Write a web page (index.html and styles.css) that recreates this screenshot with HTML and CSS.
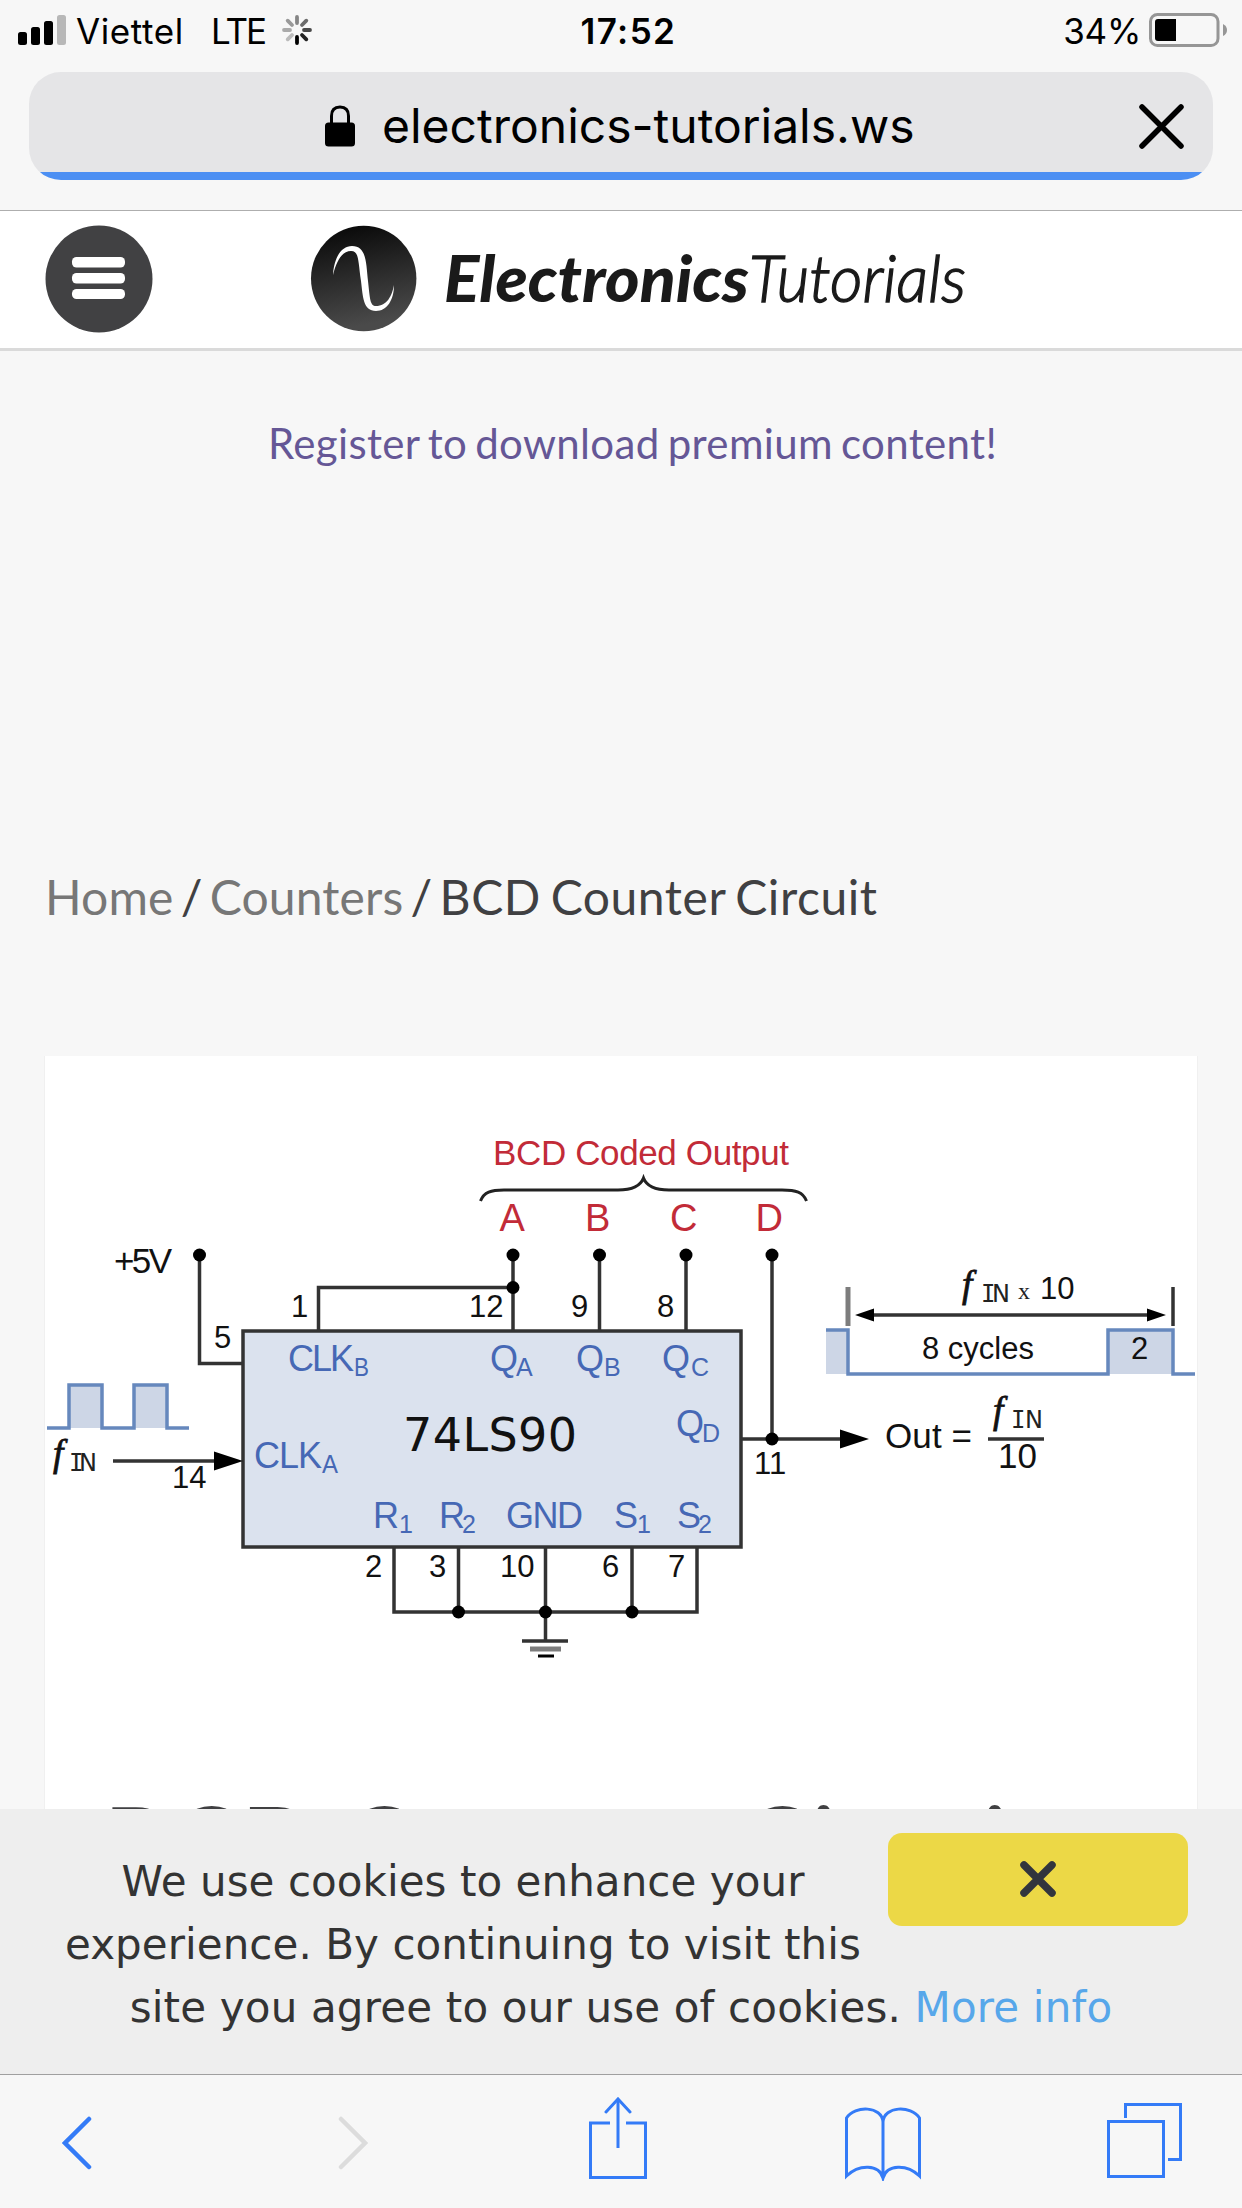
FILE: index.html
```html
<!DOCTYPE html>
<html lang="en">
<head>
<meta charset="utf-8">
<title>BCD Counter Circuit</title>
<link rel="stylesheet" href="styles.css">
</head>
<body>
<div class="screen">
  <header class="browser-top">
    <div class="status">
      <div class="status-left">
        <svg class="signal" width="49" height="30" viewBox="0 0 49 30"><rect x="0" y="17" width="9" height="13" rx="2.5"/><rect x="13" y="12" width="9" height="18" rx="2.5"/><rect x="26" y="6" width="9" height="24" rx="2.5"/><rect x="39" y="0" width="9" height="30" rx="2.5" fill="#b8b8b8"/></svg>
        <span class="carrier">Viettel</span>
        <span class="network">LTE</span>
        <svg class="spinner" width="32" height="32" viewBox="-16 -16 32 32" stroke-width="3.8" stroke-linecap="round"><path d="M0-7V-13" stroke="#858585"/><path d="M5-5L9.300-9.300" stroke="#6b6b6b"/><path d="M7 0H13" stroke="#484848"/><path d="M5 5L9.300 9.300" stroke="#222"/><path d="M0 7V13" stroke="#000"/><path d="M-5 5L-9.300 9.300" stroke="#bbb"/><path d="M-7 0H-13" stroke="#aaa"/><path d="M-5-5L-9.300-9.300" stroke="#999"/></svg>
      </div>
      <span class="clock">17:52</span>
      <div class="status-right">
        <span class="percent">34%</span>
        <svg width="79" height="34" viewBox="0 0 79 34"><rect x="1.500" y="1.500" width="67.500" height="31" rx="7" fill="none" stroke="#969696" stroke-width="3"/><path d="M9 6H27V28H9Q6 28 6 25V9Q6 6 9 6Z"/><path d="M74 11Q78 13 78 17T74 23Z" fill="#969696"/></svg>
      </div>
    </div>
    <div class="address">
      <svg class="lock" width="30" height="42" viewBox="0 0 30 42"><rect y="17.500" width="30" height="24" rx="3.500"/><path d="M6.500 19V11Q6.500 2 15 2T23.500 11V19" fill="none" stroke="#000" stroke-width="3"/></svg>
      <span class="host">electronics-tutorials.ws</span>
      <svg class="stop" width="45" height="45" viewBox="0 0 45 45"><path d="M3 3L42 42M42 3L3 42" stroke="#000" stroke-width="5.500" stroke-linecap="round"/></svg>
    </div>
  </header>

  <div class="site-header">
    <svg class="menu" width="108" height="108" viewBox="0 0 108 108"><circle cx="54" cy="54" r="53.500" fill="#414143"/><g fill="#fff"><rect x="27" y="32" width="53" height="10.500" rx="4.500"/><rect x="27" y="48" width="53" height="10.500" rx="4.500"/><rect x="27" y="64" width="53" height="10" rx="4.500"/></g></svg>
    <svg class="logo" width="660" height="108" viewBox="310 224 660 108">
      <defs><linearGradient id="disc" x1="0" y1="0" x2=".2" y2="1"><stop offset="0" stop-color="#050505"/><stop offset="1" stop-color="#4a4a4a"/></linearGradient></defs>
      <circle cx="363.700" cy="277.500" r="52.700" fill="url(#disc)"/>
      <path d="M333 274C334 257 341 245 352 245C367 245 366 263 368 280C370 298 370 305 376 305C387 305 392 295 394 284C394 299 387 310 376 310C363 310 363 296 361 280C358 259 359 250 351 250C343 250 337 258 333 274Z" fill="#fff"/>
      <text class="word-bold" x="444" y="300.500" textLength="305" lengthAdjust="spacingAndGlyphs">Electronics</text>
      <text class="word-thin" x="749" y="300.500" textLength="217" lengthAdjust="spacingAndGlyphs">Tutorials</text>
    </svg>
  </div>

  <main class="page">
    <a class="register">Register to download premium content!</a>
    <nav class="crumbs"><a>Home</a> / <a>Counters</a> / <span class="current">BCD Counter Circuit</span></nav>
    <article class="card">
      <svg class="circuit" width="1152" height="640" viewBox="45 1056 1152 640">
        <g fill="#cdd6e6"><rect x="69" y="1385" width="34" height="43"/><rect x="134" y="1385" width="33" height="43"/><rect x="826" y="1330" width="22" height="44"/><rect x="1108" y="1330" width="65" height="44"/></g>
        <rect x="243" y="1331" width="498" height="216" fill="#dbe2ee" stroke="#333" stroke-width="3.500"/>
        <g class="wave"><path d="M47 1428H69V1385H102V1428H134V1385H167V1428H189"/><path d="M826 1330H848V1374H1108V1330H1173V1374H1195"/></g>
        <g class="wire">
          <path d="M199.500 1255V1363.500H243M318.500 1331V1287.500H513M513 1255V1331M599.500 1255V1331M686 1255V1331M772 1255V1439M741 1439H846M113 1461H220"/>
          <path d="M394 1547V1612H697V1547M458.500 1547V1612M545.500 1547V1641M632 1547V1612M522 1641H568M862 1315H1160M1173 1287V1326M988 1439H1044"/>
          <path class="ground" d="M530 1649H561"/><path class="limit" d="M848 1287V1326"/><path class="earth" d="M538 1656H554"/>
        </g>
        <path class="brace" d="M480.500 1201C484 1192 491 1190 504 1190H618Q639 1190 643.500 1178Q648 1190 669 1190H782C796 1190 803 1192 806.500 1201"/>
        <g>
          <circle cx="199.500" cy="1255" r="6.500"/><circle cx="513" cy="1255" r="6.500"/><circle cx="599.500" cy="1255" r="6.500"/><circle cx="686" cy="1255" r="6.500"/><circle cx="772" cy="1255" r="6.500"/><circle cx="513" cy="1287.500" r="6.500"/><circle cx="772" cy="1439" r="6.500"/><circle cx="458.500" cy="1612" r="6.500"/><circle cx="545.500" cy="1612" r="6.500"/><circle cx="632" cy="1612" r="6.500"/>
          <path d="M214 1451.500L243 1461L214 1470.500ZM840 1429.500L869 1439L840 1448.500ZM855 1315L874 1308.500V1321.500ZM1166 1315L1147 1308.500V1321.500Z"/>
        </g>
        <g class="red"><text x="493" y="1165" textLength="296">BCD Coded Output</text><g class="big"><text x="499.500" y="1230.500">A</text><text x="585" y="1230.500">B</text><text x="670" y="1230.500">C</text><text x="755.500" y="1230.500">D</text></g></g>
        <g class="pin">
          <text x="214" y="1347.500">5</text><text x="291" y="1316.500">1</text><text x="469" y="1316.500">12</text><text x="571" y="1316.500">9</text><text x="657" y="1316.500">8</text><text x="172" y="1488">14</text><text x="365" y="1576.500">2</text><text x="429" y="1576.500">3</text><text x="500" y="1576.500">10</text><text x="602" y="1576.500">6</text><text x="668" y="1576.500">7</text><text x="754" y="1473.500">11</text><text x="1040" y="1299">10</text>
          <text x="922" y="1359" textLength="112">8 cycles</text><text x="1131" y="1359">2</text>
        </g>
        <g class="label">
          <text x="114" y="1272.500" textLength="58">+5V</text><text x="885" y="1448" textLength="87">Out =</text><text x="998" y="1468">10</text>
        </g>
        <text class="chip" x="403" y="1451" textLength="174">74LS90</text>
        <g class="blue">
          <text x="288" y="1370.500" textLength="66">CLK</text><text x="254" y="1468" textLength="68">CLK</text><text x="490" y="1370.500" textLength="24">Q</text><text x="576" y="1370.500" textLength="24">Q</text><text x="662" y="1370.500" textLength="24">Q</text><text x="676" y="1436" textLength="24">Q</text><text x="373" y="1528">R</text><text x="439" y="1528">R</text><text x="506" y="1528" textLength="77">GND</text><text x="614" y="1528">S</text><text x="677" y="1528">S</text>
          <g class="sub"><text x="354" y="1376" textLength="15" lengthAdjust="spacingAndGlyphs">B</text><text x="322" y="1473" textLength="16" lengthAdjust="spacingAndGlyphs">A</text><text x="516" y="1376">A</text><text x="604" y="1376">B</text><text x="691" y="1376">C</text><text x="702" y="1442">D</text><text x="399" y="1533">1</text><text x="462" y="1533">2</text><text x="637" y="1533">1</text><text x="698" y="1533">2</text></g>
        </g>
        <g class="freq"><text x="53" y="1466">f</text><text x="962" y="1297">f</text><text x="993" y="1423">f</text></g>
        <g class="in"><text class="mono" x="69" y="1471">I</text><text x="79" y="1471">N</text><text class="mono" x="981" y="1302">I</text><text x="992" y="1302">N</text><text class="mono" x="1011" y="1428">I</text><text x="1025" y="1428">N</text><text class="times" x="1018" y="1299">x</text></g>
      </svg>
      <h1>BCD Counter Circuit</h1>
    </article>
  </main>

  <section class="cookies">
    <button class="dismiss" aria-label="Close"><svg width="36" height="36" viewBox="0 0 36 36"><path d="M4 4L32 32M32 4L4 32" stroke="#32353d" stroke-width="7.500" stroke-linecap="round"/></svg></button>
    <p>We use cookies to enhance your<br>experience. By continuing to visit this<br><span class="last">site you agree to our use of cookies. <a>More info</a></span></p>
  </section>

  <footer class="toolbar">
    <svg class="back" width="30" height="54" viewBox="0 0 30 54"><path d="M27 3L3 27L27 51" stroke-width="4.500"/></svg>
    <svg class="forward" width="30" height="54" viewBox="0 0 30 54"><path d="M3 3L27 27L3 51" stroke-width="4.500"/></svg>
    <svg class="share" width="58" height="82" viewBox="0 0 58 82"><path d="M21 26H1.500V80.500H56.500V26H37M29 51V3" stroke-linecap="butt"/><path d="M17 15L29 2L41 15"/></svg>
    <svg class="book" width="76" height="74" viewBox="0 0 76 74"><path d="M38 15C37 -1 10 -2 1.500 11V69C14 57 34 57 38 71C42 57 62 57 74.500 69V11C66 -2 39 -1 38 15V71"/></svg>
    <svg class="tabs" width="76" height="76" viewBox="0 0 76 76"><rect x="1.500" y="18.500" width="55" height="55"/><path d="M18.500 15V1.500H73.500V56.500H61" stroke-linecap="butt"/></svg>
  </footer>
</div>
</body>
</html>
```
FILE: styles.css
```css
* { box-sizing: border-box; }
body { margin: 0; background: #f7f7f7; }
svg { display: block; flex: none; }
.screen { width: 1242px; height: 2208px; display: flex; flex-direction: column; overflow: hidden; font-family: Lato, sans-serif; }

.browser-top { height: 211px; flex: none; border-bottom: 1px solid #aeaeae; font-family: Inter, "Liberation Sans", sans-serif; color: #000; }
.status { height: 72px; display: grid; grid-template-columns: 1fr auto 1fr; padding: 0 14px 12px 18px; align-items: center; font-size: 35px; line-height: 44px; white-space: nowrap; }
.status span { padding-top: 2px; }
.status-left, .status-right { display: flex; align-items: center; }
.status-right { justify-content: flex-end; }
.carrier { margin-left: 9px; width: 135px; letter-spacing: .6px; }
.network { width: 70px; letter-spacing: -2px; }
.clock { font-weight: 600; width: 97px; margin-left: 12px; letter-spacing: 1.4px; }
.percent { letter-spacing: -.3px; margin-right: 8px; }
.address { height: 108px; margin: 0 29px; border-radius: 32px; background: linear-gradient(#e5e5e7 100px, #4c8ff3 100px); display: flex; align-items: center; padding: 0 29px 0 296px; }
.host { margin-left: 27px; font-size: 48px; line-height: 60px; white-space: nowrap; }
.stop { margin-left: auto; }

.site-header { height: 140px; flex: none; background: #fff; border-bottom: 3px solid #dadada; display: flex; align-items: center; padding: 0 0 2px 45px; }
.logo { margin-left: 157px; }
.word-bold { font: italic 900 65px Lato, sans-serif; fill: #1a1a1a; }
.word-thin { font: italic 300 65px Lato, sans-serif; fill: #1a1a1a; stroke: #1a1a1a; stroke-width: 1.4px; }

.page { height: 1458px; flex: none; overflow: hidden; display: flex; flex-direction: column; }
.register { margin: 67px 0 0 268px; font-size: 42px; line-height: 50px; color: #655796; white-space: nowrap; letter-spacing: .35px; word-spacing: -3px; }
.crumbs { margin: 400px 0 0 45px; font-size: 48px; line-height: 58px; color: #404042; white-space: nowrap; letter-spacing: .15px; word-spacing: -5.3px; }
.crumbs a { color: #777; }
.current { letter-spacing: .55px; word-spacing: -3px; }
.card { margin: 130px 44px 0; border: 1px solid #f0f0f0; border-top: 0; background: #fff; height: 900px; flex: none; }
.card h1 { margin: 85px 0 0 58px; font-size: 103px; line-height: 120px; font-weight: 400; color: #404042; white-space: nowrap; letter-spacing: 1.1px; word-spacing: -4px; }

.circuit { font-family: "Liberation Sans", Arial, sans-serif; }
.wave { fill: none; stroke: #6688bd; stroke-width: 3.5px; }
.wire { fill: none; stroke: #333; stroke-width: 3.5px; }
.ground, .limit { stroke: #7d7d7d; stroke-width: 5px; }
.earth { stroke: #000; stroke-width: 3px; }
.brace { fill: none; stroke: #222; stroke-width: 3px; }
.red { fill: #c22b38; font-size: 35px; }
.big { font-size: 38px; }
.pin { fill: #111; font-size: 31px; }
.label { fill: #111; font-size: 35px; }
.chip { fill: #111; font: 46px "DejaVu Sans", sans-serif; }
.blue { fill: #4668b5; font-size: 36px; }
.sub { font-size: 25px; }
.freq { font: italic 400 37px "Liberation Serif", serif; fill: #111; stroke: #111; stroke-width: .8px; }
.in { font: 24px "DejaVu Sans", sans-serif; fill: #222; }
.mono { font-family: "DejaVu Sans Mono", monospace; }
.times { font-family: "Liberation Serif", serif; }

.cookies { height: 266px; flex: none; background: #eee; padding: 24px 38px 0; font-family: "DejaVu Sans", sans-serif; color: #333; border-bottom: 1px solid #a0a0a0; }
.cookies p { margin: 0; padding-top: 17px; font-size: 42px; line-height: 63px; text-align: center; white-space: nowrap; letter-spacing: .06px; }
.last { letter-spacing: .17px; }
.cookies a { color: #57a7ea; }
.dismiss { float: right; margin-right: 16px; width: 300px; height: 93px; border: 0; border-radius: 14px; background: #ecd846; padding: 0 0 1px; display: flex; align-items: center; justify-content: center; }

.toolbar { flex: 1; background: #f7f7f7; display: flex; align-items: flex-start; fill: none; stroke: #347bf7; stroke-width: 3px; stroke-linecap: round; }
.back { margin: 41px 0 0 62px; }
.forward { margin: 41px 0 0 246px; stroke: #dcdcdc; }
.share { margin: 22px 0 0 221px; }
.book { margin: 32px 0 0 198px; }
.tabs { margin: 28px 0 0 186px; }
```
